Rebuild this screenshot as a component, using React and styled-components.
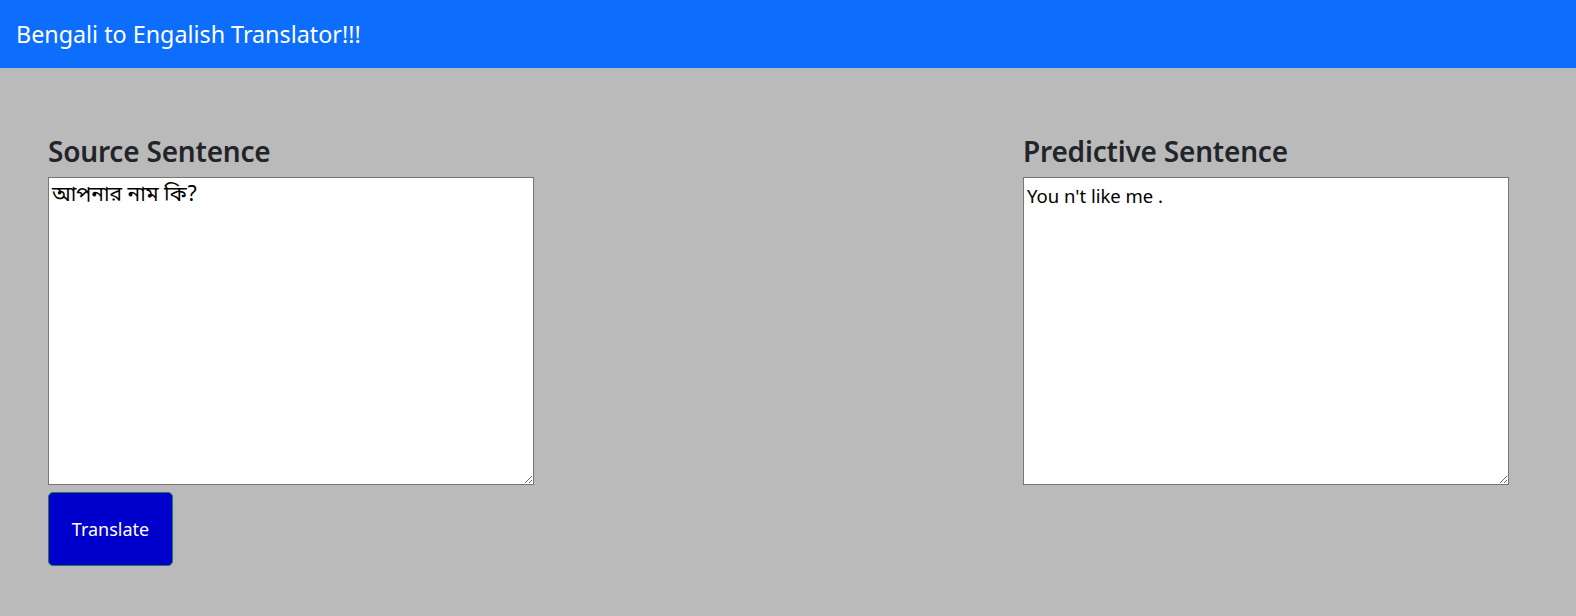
import React from "react";
import styled, { createGlobalStyle } from "styled-components";

const Global = createGlobalStyle`
  html, body {
    margin: 0;
    padding: 0;
    background: #bababa;
    min-height: 100%;
  }
  body {
    font-family: "Noto Sans", "Open Sans", sans-serif;
    color: #212529;
  }
  * { box-sizing: border-box; }
`;

const Page = styled.div`
  min-height: 616px;
  background: #bababa;
`;

const NavBar = styled.header`
  height: 68px;
  background: #0d6efd;
  display: flex;
  align-items: center;
  padding-left: 16px;
`;

const Brand = styled.h1`
  margin: 0;
  font-size: 23.3px;
  font-weight: 400;
  color: #ffffff;
`;

const Main = styled.main`
  display: flex;
  justify-content: space-between;
  padding: 66px 67px 0 48px;
`;

const Column = styled.section`
  width: 486px;
  display: flex;
  flex-direction: column;
  align-items: flex-start;
`;

const Heading = styled.h3`
  margin: 0 0 8px;
  font-size: 28px;
  line-height: 1.25;
  font-weight: 600;
  color: #212529;
  letter-spacing: -0.2px;
`;

const TextBox = styled.textarea`
  display: block;
  width: 486px;
  height: 308px;
  margin: 0;
  padding: ${(p) => (p.$bengali ? "5px 3px" : "6px 3px")};
  border: 1px solid #767676;
  border-radius: 0;
  background: #ffffff;
  color: #000000;
  font-family: ${(p) =>
    p.$bengali
      ? `"Noto Sans Bengali", "Noto Serif Bengali", "Lohit Bengali", "Noto Sans", sans-serif`
      : `"Noto Sans", "Open Sans", sans-serif`};
  font-size: ${(p) => (p.$bengali ? "21px" : "18.5px")};
  line-height: 1.3;
  resize: both;
  outline: none;
`;

const TranslateButton = styled.button`
  margin-top: 7px;
  width: 125px;
  height: 74px;
  background: #0000cc;
  color: #ffffff;
  border: 1px solid #1f7a5a;
  border-radius: 5px;
  font-family: "Noto Sans", "Open Sans", sans-serif;
  font-size: 18px;
  cursor: pointer;
`;

export default function App() {
  return (
    <Page>
      <Global />
      <NavBar>
        <Brand>Bengali to Engalish Translator!!!</Brand>
      </NavBar>
      <Main>
        <Column>
          <Heading>Source Sentence</Heading>
          <TextBox $bengali defaultValue="আপনার নাম কি?" />
          <TranslateButton>Translate</TranslateButton>
        </Column>
        <Column>
          <Heading>Predictive Sentence</Heading>
          <TextBox defaultValue="You n't like me ." />
        </Column>
      </Main>
    </Page>
  );
}
